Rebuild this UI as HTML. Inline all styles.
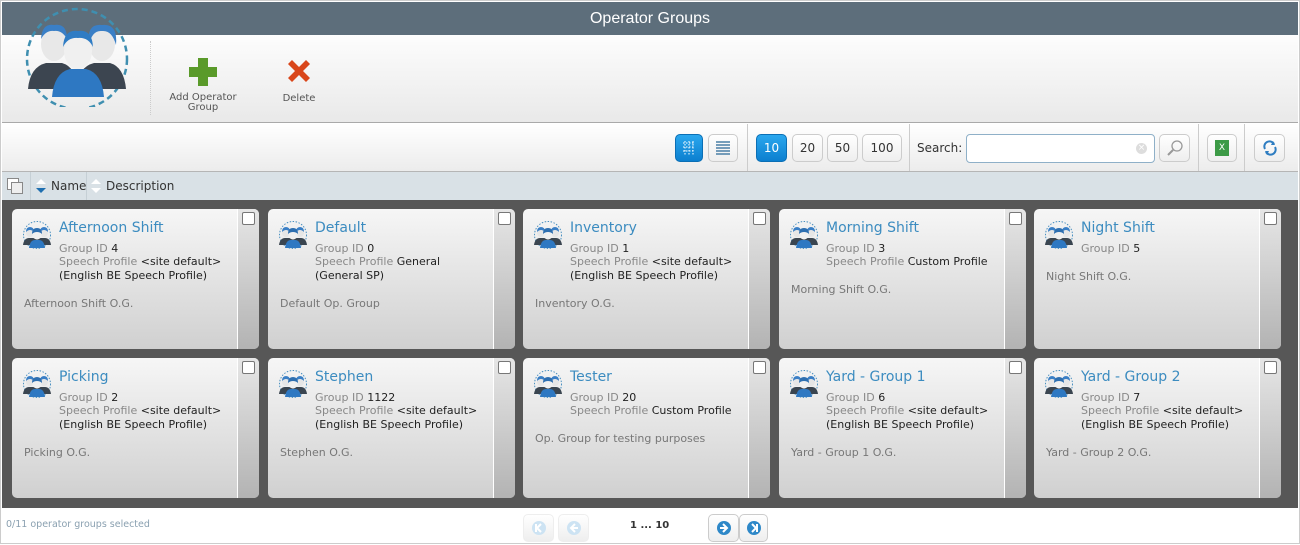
<!DOCTYPE html>
<html><head><style>
*{box-sizing:border-box;margin:0;padding:0}
body{width:1300px;height:544px;overflow:hidden;background:#fff;font-family:"DejaVu Sans",Verdana,sans-serif;position:relative}
.frame{position:absolute;left:0;top:0;width:1300px;height:544px;border:1px solid #ccc}
.title{position:absolute;left:2px;top:2px;width:1296px;height:33px;background:#5d6e7b;color:#fff;font:16px "Liberation Sans",Arial,sans-serif;text-align:center;line-height:33px}
.tb1{position:absolute;left:2px;top:35px;width:1296px;height:88px;background:linear-gradient(#fdfdfd,#e9e9e9);border-bottom:1px solid #a9a9a9}
.tb2{position:absolute;left:2px;top:123px;width:1296px;height:49px;background:linear-gradient(#fff,#ececec);border-bottom:1px solid #b5b5b5}
.hdr{position:absolute;left:2px;top:172px;width:1296px;height:28px;background:#d9e1e6;font-size:12px;color:#333}
.grid{position:absolute;left:2px;top:200px;width:1296px;height:308px;background:#575757}
.foot{position:absolute;left:2px;top:508px;width:1296px;height:34px;background:#fff}
.btn{position:absolute;top:134px;height:28px;border:1px solid #ccc;border-radius:5px;background:linear-gradient(#fff,#eee);font-size:12px;color:#333;text-align:center;line-height:26px}
.btn.on{background:linear-gradient(#2aa7ee,#0c7fcf);border-color:#0b6fb5;color:#fff}
.sep{position:absolute;top:124px;width:1px;height:47px;background:#ccc}
.card{position:absolute;width:247px;height:140px;border-radius:5px;background:linear-gradient(#f6f6f6,#d0d0d0);overflow:hidden}
.card .strip{position:absolute;right:0;top:0;width:22px;height:100%;border-left:1px solid #fff;background:linear-gradient(#e6e6e6,#b3b3b3)}
.card .cb{position:absolute;right:4px;top:3px;width:13px;height:13px;border:1px solid #777;border-radius:2px;background:#fff}
.card .ic{position:absolute;left:10px;top:11px}
.card .t{position:absolute;left:47px;top:11px;font-size:14px;color:#3c8cc0}
.card .d{position:absolute;left:47px;top:33px;font-size:11px;line-height:13.3px;color:#222}
.card .d span{color:#888}
.card .ds{position:absolute;left:12px;font-size:11px;color:#777}
</style></head><body>
<div class="frame"></div>
<div class="title">Operator Groups</div>
<div class="tb1">
<svg style="position:absolute;left:22px;top:-38px" width="110" height="110" viewBox="0 0 110 110">
<circle cx="53" cy="62" r="50" fill="none" stroke="#3f8fb0" stroke-width="2.5" stroke-dasharray="6 4"/>
<path d="M4 92 Q6 70 22 66 L38 66 Q52 70 54 92Z" fill="#3c4550"/>
<path d="M52 92 Q54 70 70 66 L86 66 Q100 70 102 92Z" fill="#3c4550"/>
<ellipse cx="30" cy="47" rx="13" ry="17" fill="#e8e8e8"/><path d="M17 42 Q18 26 30 28 Q43 26 43 42 Q38 33 30 34 Q22 33 17 42Z" fill="#3a7fc6"/>
<ellipse cx="78" cy="47" rx="13" ry="17" fill="#e8e8e8"/><path d="M65 48 Q62 26 78 28 Q94 26 92 48 Q88 33 78 34 Q68 33 65 48Z" fill="#3a7fc6"/>
<path d="M28 100 Q30 76 46 72 L62 72 Q78 76 80 100Z" fill="#2e78c2"/>
<ellipse cx="54" cy="54" rx="14" ry="18" fill="#f0f0f0"/><path d="M39 50 Q40 32 54 34 Q68 32 69 50 Q64 40 54 41 Q44 40 39 50Z" fill="#2f7cc4"/>
</svg>
<div style="position:absolute;left:148px;top:6px;width:1px;height:74px;border-left:1px dotted #ccc"></div>
<svg style="position:absolute;left:186px;top:22px" width="30" height="30"><path d="M10 1h10v9h9v10h-9v9H10v-9H1V10h9z" fill="#5a9a2a"/></svg>
<div style="position:absolute;left:160px;top:58px;width:82px;text-align:center;font-size:10px;color:#555;line-height:10px">Add Operator Group</div>
<svg style="position:absolute;left:283px;top:22px" width="28" height="28"><path d="M3 7l4-4 7 7 7-7 4 4-7 7 7 7-4 4-7-7-7 7-4-4 7-7z" fill="#d9461a"/></svg>
<div style="position:absolute;left:270px;top:58px;width:54px;text-align:center;font-size:10px;color:#555">Delete</div>
</div>
<div class="tb2"></div>
<div class="btn on" style="left:675px;width:28px"><svg width="16" height="16" viewBox="0 0 16 16" style="margin-top:5px"><g stroke="#fff" stroke-dasharray="1.5 1.5"><path d="M2 3h12M2 7h12M2 11h12M4 1v14M8 1v14M12 1v14"/></g></svg></div>
<div class="btn" style="left:708px;width:30px"><svg width="16" height="16" style="margin-top:5px"><path d="M1 2h14M1 5h14M1 8h14M1 11h14M1 14h14" stroke="#4a7fa6" stroke-width="1.5"/></svg></div>
<div class="sep" style="left:747px"></div>
<div class="btn on" style="left:756px;width:31px">10</div>
<div class="btn" style="left:792px;width:31px">20</div>
<div class="btn" style="left:827px;width:31px">50</div>
<div class="btn" style="left:862px;width:40px">100</div>
<div class="sep" style="left:909px"></div>
<div style="position:absolute;left:917px;top:141px;font-size:12px;color:#333">Search:</div>
<div style="position:absolute;left:966px;top:134px;width:189px;height:29px;border:1px solid #8fb0c8;border-radius:4px;background:#fff"><div style="position:absolute;right:7px;top:8px;width:11px;height:11px;border-radius:50%;background:#ddd;color:#fff;font-size:9px;line-height:11px;text-align:center">×</div></div>
<div class="btn" style="left:1159px;width:31px"><svg width="18" height="18" style="margin-top:4px"><circle cx="11" cy="7" r="5" fill="none" stroke="#999" stroke-width="1.3"/><path d="M7 11l-5 5" stroke="#999" stroke-width="2"/></svg></div>
<div class="sep" style="left:1198px"></div>
<div class="btn" style="left:1207px;width:30px"><div style="width:14px;height:16px;background:#3c9a46;margin:5px auto;color:#fff;font-size:9px;line-height:16px">X</div></div>
<div class="sep" style="left:1244px"></div>
<div class="btn" style="left:1254px;width:31px"><svg width="16" height="16" style="margin-top:5px"><path d="M3 9a5 5 0 0 1 9-5M13 7a5 5 0 0 1-9 5" fill="none" stroke="#2e7dc1" stroke-width="2"/><path d="M11 1l2 4-4 0z M5 15l-2-4 4 0z" fill="#2e7dc1"/></svg></div>
<div class="hdr">
<svg style="position:absolute;left:5px;top:6px" width="16" height="16"><rect x="0.5" y="0.5" width="11" height="11" fill="#fff" stroke="#888"/><rect x="4.5" y="4.5" width="11" height="11" fill="#eee" stroke="#888"/></svg>
<div style="position:absolute;left:28px;top:0;width:1px;height:28px;background:#c5cfd5"></div>
<svg style="position:absolute;left:33px;top:6px" width="12" height="16"><path d="M1 6l5-5 5 5z" fill="#fff"/><path d="M1 10l5 5 5-5z" fill="#1f6fb0"/></svg>
<div style="position:absolute;left:49px;top:7px">Name</div>
<div style="position:absolute;left:84px;top:0;width:1px;height:28px;background:#c5cfd5"></div>
<svg style="position:absolute;left:88px;top:6px" width="12" height="16"><path d="M1 6l5-5 5 5z" fill="#fff"/><path d="M1 10l5 5 5-5z" fill="#fff"/></svg>
<div style="position:absolute;left:104px;top:7px">Description</div>
</div>
<div class="grid"></div>
<div id="cards"></div>
<div class="foot">
<div style="position:absolute;left:4px;top:11px;font-size:9.5px;color:#8aa0b0">0/11 operator groups selected</div>
<div class="btn" style="left:521px;top:6px;width:31px;border-color:#eee"><svg width="16" height="16" style="margin-top:5px"><circle cx="8" cy="8" r="7" fill="#cde3f3"/><path d="M10 4l-4 4 4 4M5 4v8" stroke="#fff" stroke-width="2" fill="none"/></svg></div>
<div class="btn" style="left:556px;top:6px;width:31px;border-color:#eee"><svg width="16" height="16" style="margin-top:5px"><circle cx="8" cy="8" r="7" fill="#cde3f3"/><path d="M9 4l-4 4 4 4M5 8h7" stroke="#fff" stroke-width="2" fill="none"/></svg></div>
<div style="position:absolute;left:628px;top:12px;font-size:10px;font-weight:bold;color:#333">1 ... 10</div>
<div class="btn" style="left:706px;top:6px;width:31px"><svg width="16" height="16" style="margin-top:5px"><circle cx="8" cy="8" r="7" fill="#2e88c8"/><path d="M7 4l4 4-4 4M4 8h7" stroke="#fff" stroke-width="2" fill="none"/></svg></div>
<div class="btn" style="left:737px;top:6px;width:29px"><svg width="16" height="16" style="margin-top:5px"><circle cx="8" cy="8" r="7" fill="#2e88c8"/><path d="M6 4l4 4-4 4M11 4v8" stroke="#fff" stroke-width="2" fill="none"/></svg></div>
</div>
<script>
var d=[
["Afternoon Shift","4",["&lt;site default&gt;","(English BE Speech Profile)"],"Afternoon Shift O.G."],
["Default","0",["General","(General SP)"],"Default Op. Group"],
["Inventory","1",["&lt;site default&gt;","(English BE Speech Profile)"],"Inventory O.G."],
["Morning Shift","3",["Custom Profile"],"Morning Shift O.G."],
["Night Shift","5",null,"Night Shift O.G."],
["Picking","2",["&lt;site default&gt;","(English BE Speech Profile)"],"Picking O.G."],
["Stephen","1122",["&lt;site default&gt;","(English BE Speech Profile)"],"Stephen O.G."],
["Tester","20",["Custom Profile"],"Op. Group for testing purposes"],
["Yard - Group 1","6",["&lt;site default&gt;","(English BE Speech Profile)"],"Yard - Group 1 O.G."],
["Yard - Group 2","7",["&lt;site default&gt;","(English BE Speech Profile)"],"Yard - Group 2 O.G."]];
var xs=[12,268,523,779,1034],ys=[209,358],h="";
var ic='<svg class="ic" width="30" height="30" viewBox="0 0 30 30"><circle cx="15" cy="15" r="13.5" fill="none" stroke="#4a90c0" stroke-dasharray="1.5 1.5"/><path d="M1 25q1-7 6-7h4q5 0 6 7zM13 25q1-7 6-7h4q5 0 6 7z" fill="#3a4550"/><circle cx="8" cy="13" r="4" fill="#e6e6e6"/><circle cx="22" cy="13" r="4" fill="#e6e6e6"/><path d="M4 12q0-5 4-5t4 5q-2-2-4-2t-4 2zM18 12q0-5 4-5t4 5q-2-2-4-2t-4 2z" fill="#3a7fc6"/><path d="M7 28q1-8 6-8h4q5 0 6 8z" fill="#2e78c2"/><circle cx="15" cy="15" r="4.5" fill="#f0f0f0"/><path d="M10 14q0-6 5-6t5 6q-2-2-5-2t-5 2z" fill="#2e6fb0"/></svg>';
d.forEach(function(c,i){var x=xs[i%5],y=ys[i<5?0:1];
var lines='<span>Group ID</span> '+c[1];var n=1;
if(c[2]){lines+='<br><span>Speech Profile</span> '+c[2][0];n++;if(c[2][1]){lines+='<br>'+c[2][1];n++;}}
var dy=n==1?61:n==2?74:88;
h+='<div class="card" style="left:'+x+'px;top:'+y+'px"><div class="strip"></div><div class="cb"></div>'+ic+'<div class="t">'+c[0]+'</div><div class="d">'+lines+'</div><div class="ds" style="top:'+dy+'px">'+c[3]+'</div></div>';});
document.getElementById('cards').innerHTML=h;
</script>
</body></html>
